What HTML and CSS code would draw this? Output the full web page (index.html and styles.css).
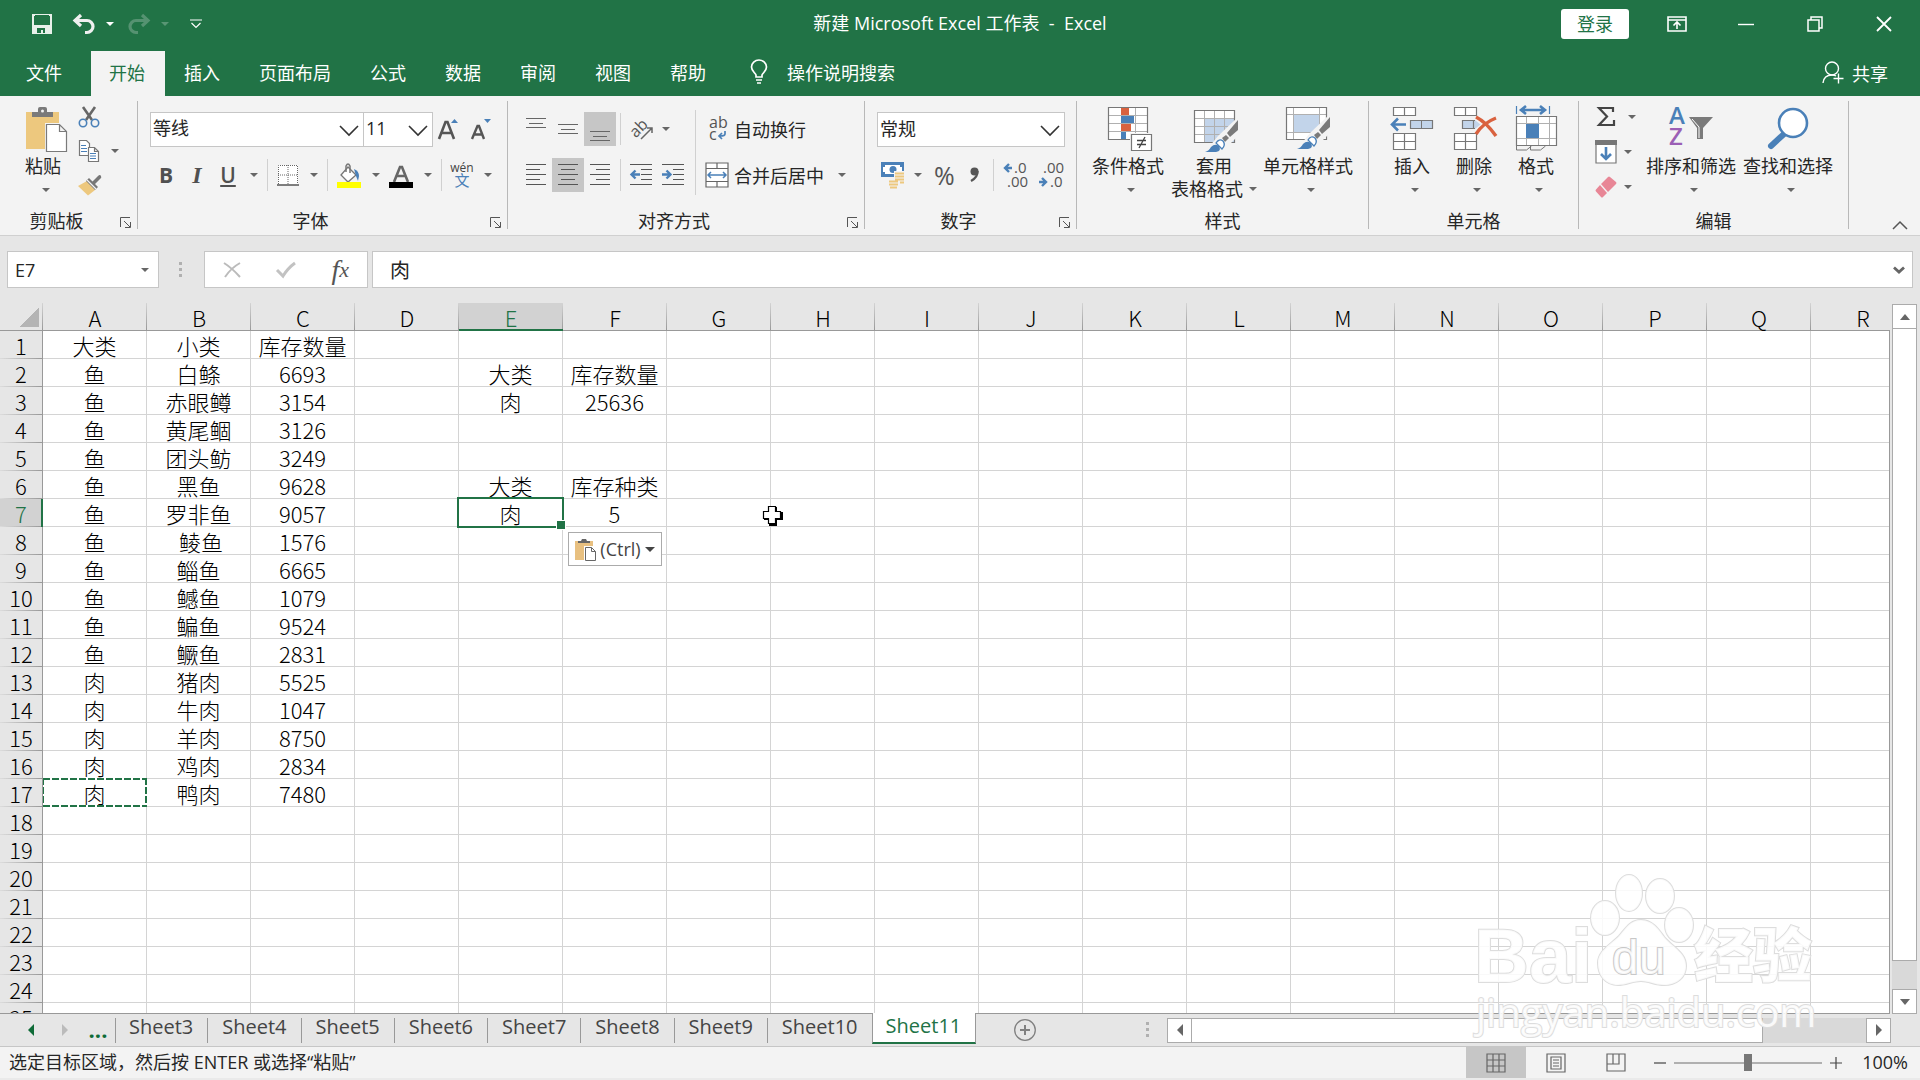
FILE: index.html
```
<!DOCTYPE html>
<html lang="zh-CN">
    <head>
        <meta charset="utf-8">
        <title>新建 Microsoft Excel 工作表 - Excel</title>
        <link rel="stylesheet" href="styles.css">
        <script src="script.js" defer></script>
    </head>

    <body>

        <!-- Title bar -->
        <header class="titleBar">
            <div class="quickAccess">
                <button class="qatButton" aria-label="保存"><svg width="20" height="20" viewBox="0 0 20 20"><path d="M1 1h18v18H1z" fill="none" stroke="#e8f0ea" stroke-width="2"/><path d="M2 11h16v8H2z" fill="#e8f0ea"/><path d="M3 1h14v9H3z" fill="#217346"/><path d="M5 14h8v5h-2v-3h-2v3H5z" fill="#217346"/></svg></button>
                <button class="qatButton undo" aria-label="撤消"><svg width="22" height="20" viewBox="0 0 22 20"><path d="M8 1L2 6.500l6 5.500M2.500 6.500H14a6 6 0 0 1 0 12h-2" fill="none" stroke="#f0f0f0" stroke-width="3.200"/></svg><i class="caret"></i></button>
                <button class="qatButton redo" aria-label="恢复"><svg width="22" height="20" viewBox="0 0 22 20"><path d="M14 1l6 5.500-6 5.500M19.500 6.500H8a6 6 0 0 0 0 12h2" fill="none" stroke="#f0f0f0" stroke-width="3.200"/></svg><i class="caret"></i></button>
                <button class="qatButton" aria-label="自定义快速访问工具栏"><svg width="12" height="10" viewBox="0 0 12 10"><path d="M0 1h12M1.500 4L6 8.500 10.500 4" fill="none" stroke="#fff" stroke-width="1.200"/></svg></button>
            </div>
            <h1 class="docTitle">新建 Microsoft Excel 工作表&nbsp; -&nbsp; Excel</h1>
            <div class="windowButtons">
                <button class="signIn">登录</button>
                <button class="windowButton" aria-label="功能区显示选项"><svg width="20" height="16" viewBox="0 0 20 16"><path d="M1 1h18v14H1zM1 4h18M10 13V7M6.500 9.500L10 6l3.500 3.500" fill="none" stroke="#fff" stroke-width="1.600"/></svg></button>
                <button class="windowButton" aria-label="最小化"><svg width="16" height="16" viewBox="0 0 16 16"><path d="M0 8.500h16" stroke="#fff" stroke-width="1.400"/></svg></button>
                <button class="windowButton" aria-label="向下还原"><svg width="16" height="16" viewBox="0 0 16 16"><path d="M1 4h11v11H1zM4 4V1h11v11h-3" fill="none" stroke="#fff" stroke-width="1.500"/></svg></button>
                <button class="windowButton" aria-label="关闭"><svg width="16" height="16" viewBox="0 0 16 16"><path d="M1 1l14 14M15 1L1 15" stroke="#fff" stroke-width="1.800"/></svg></button>
            </div>
        </header>

        <!-- Ribbon tabs -->
        <nav class="ribbonTabs">
            <button class="ribbonTab file">文件</button>
            <button class="ribbonTab active">开始</button>
            <button class="ribbonTab">插入</button>
            <button class="ribbonTab">页面布局</button>
            <button class="ribbonTab">公式</button>
            <button class="ribbonTab">数据</button>
            <button class="ribbonTab">审阅</button>
            <button class="ribbonTab">视图</button>
            <button class="ribbonTab">帮助</button>
            <button class="tellMe"><svg width="18" height="25" viewBox="0 0 18 25"><path d="M6 18v-2C5 13.500 1.500 12 1.500 8a7.500 7 0 0 1 15 0c0 4-3.500 5.500-4.500 8v2zM6 21h6M7 24h4" fill="none" stroke="#fff" stroke-width="1.700"/></svg>操作说明搜索</button>
            <button class="share"><svg width="22" height="23" viewBox="0 0 22 23"><circle cx="10" cy="7.500" r="6.500" fill="none" stroke="#fff" stroke-width="1.400"/><path d="M1 22c.5-5 4-8 9-8 2 0 3 .3 4 1M16.500 12.500v10M11.500 17.500h10" fill="none" stroke="#fff" stroke-width="1.400"/></svg>共享</button>
        </nav>

        <!-- Ribbon -->
        <main class="ribbon">

            <section class="group clipboardGroup">
                <div class="groupBody">
                    <button class="bigButton pasteButton"><svg width="44" height="46" viewBox="0 0 44 46"><path d="M1 6h33v37H1z" fill="#edc87e"/><path d="M7 11V6h6V3q0-2 2-2h5q2 0 2 2v3h6v5z" fill="#7a7a7a"/><circle cx="17.500" cy="5" r="1.500" fill="#f3f3f3"/><path d="M20 17h15l8 8v22H20z" fill="#f3f3f3"/><path d="M21.500 18.500h13l7 7v20h-20zM34.500 18.500v7h7" fill="#fff" stroke="#7a7a7a" stroke-width="1.200"/></svg><span>粘贴</span><i class="caret"></i></button>
                    <div class="smallColumn">
                        <button class="iconButton" aria-label="剪切"><svg width="22" height="22" viewBox="0 0 22 22"><path d="M5 1l9 13M17 1L8 14" stroke="#666" stroke-width="2.600"/><circle cx="5" cy="17" r="3.700" fill="none" stroke="#4a80b8" stroke-width="1.600"/><circle cx="17" cy="17" r="3.700" fill="none" stroke="#4a80b8" stroke-width="1.600"/></svg></button>
                        <button class="iconButton" aria-label="复制"><svg width="22" height="22" viewBox="0 0 22 22"><path d="M1.500.500h7l3 3v12h-10z" fill="#fff" stroke="#777" stroke-width="1.200"/><path d="M3 5.500h5M3 8.500h6M3 11.500h6" stroke="#4a80b8"/><path d="M10.500 7.500h6l4 4v10h-10zM16.500 7.500v4h4" fill="#fff" stroke="#777" stroke-width="1.200"/><path d="M12 13.500h6M12 16h6M12 18.500h6" stroke="#4a80b8"/></svg><i class="caret"></i></button>
                        <button class="iconButton" aria-label="格式刷"><svg width="24" height="22" viewBox="0 0 24 22"><path d="M0 12l9-5 8 9-7 5.500z" fill="#edc87e"/><path d="M8 7l3-3 9 9-3 3z" fill="#777"/><path d="M13 9l7-7q2-2 3 0 1 2-1 3l-6 6z" fill="#777"/><path d="M9 6l9 9" stroke="#f3f3f3" stroke-width="1.300"/></svg></button>
                    </div>
                </div>
                <div class="groupFoot"><h2>剪贴板</h2><button class="launcher" aria-label="剪贴板设置"><svg width="11" height="11" viewBox="0 0 11 11"><path d="M.500 10V.500H10M4 4l6 6M10.500 5v5.500H5" fill="none" stroke="#555"/></svg></button></div>
            </section>

            <section class="group fontGroup">
                <div class="groupBody rows">
                    <div class="toolRow">
                        <label class="combo fontName"><select aria-label="字体"><option>等线</option></select><svg width="20" height="11" viewBox="0 0 20 11"><path d="M1 1l9 9 9-9" fill="none" stroke="#333" stroke-width="1.600"/></svg></label>
                        <label class="combo fontSize"><select aria-label="字号"><option>11</option></select><svg width="20" height="11" viewBox="0 0 20 11"><path d="M1 1l9 9 9-9" fill="none" stroke="#333" stroke-width="1.600"/></svg></label>
                        <button class="iconButton growFont" aria-label="增大字号"><svg width="20" height="20" viewBox="0 0 20 20"><path d="M1 20L7.500 3h2L16 20M4 14h9" fill="none" stroke="#555" stroke-width="2.600"/><path d="M13 4l3.500-4L20 4z" fill="#4a80b8"/></svg></button>
                        <button class="iconButton shrinkFont" aria-label="减小字号"><svg width="20" height="20" viewBox="0 0 20 20"><path d="M1 20L6.500 7h1.500l5 13M3.500 15.500h7" fill="none" stroke="#555" stroke-width="2.400"/><path d="M13 0h7l-3.500 4z" fill="#4a80b8"/></svg></button>
                    </div>
                    <div class="toolRow fontTools">
                        <button class="iconButton letter bold">B</button>
                        <button class="iconButton letter italic">I</button>
                        <button class="iconButton letter underline"><u>U</u></button>
                        <i class="caret"></i>
                        <i class="rule"></i>
                        <button class="iconButton" aria-label="边框"><svg width="22" height="22" viewBox="0 0 22 22"><path d="M1 1h20v20H1z" fill="#fff"/><path d="M1.500 20V1.500h19V20M11 1v20M1 11h20" fill="none" stroke="#666" stroke-dasharray="1 1"/><path d="M0 21h22" stroke="#555" stroke-width="1.500"/></svg></button>
                        <i class="caret"></i>
                        <i class="rule"></i>
                        <button class="iconButton" aria-label="填充颜色"><svg width="24" height="25" viewBox="0 0 24 25"><path d="M11 4l8 8-8 7-7-7z" fill="#fff" stroke="#777" stroke-width="1.300"/><path d="M9 9V3q2-4 4 0v7" fill="none" stroke="#777" stroke-width="1.500"/><path d="M17 6q5 2 5 7l-1 5-2-5z" fill="#4a80b8"/><path d="M0 19h24v6H0z" fill="#ff0"/></svg></button>
                        <i class="caret"></i>
                        <button class="iconButton" aria-label="字体颜色"><svg width="24" height="25" viewBox="0 0 24 25"><path d="M5 19L11 4h2l6 15M7.500 13h9" fill="none" stroke="#666" stroke-width="2.600"/><path d="M0 19h24v6H0z"/></svg></button>
                        <i class="caret"></i>
                        <i class="rule"></i>
                        <button class="iconButton pinyin"><span>wén</span><b>文</b></button>
                        <i class="caret"></i>
                    </div>
                </div>
                <div class="groupFoot"><h2>字体</h2><button class="launcher" aria-label="字体设置"><svg width="11" height="11" viewBox="0 0 11 11"><path d="M.500 10V.500H10M4 4l6 6M10.500 5v5.500H5" fill="none" stroke="#555"/></svg></button></div>
            </section>

            <section class="group alignGroup">
                <div class="groupBody">
                    <div class="rows alignLeftTools">
                        <div class="toolRow">
                            <button class="alignButton" aria-label="顶端对齐"><svg width="20" height="22" viewBox="0 0 20 22"><path d="M0 .500h20M3 5.500h14M0 9.500h20" stroke="#666"/></svg></button>
                            <button class="alignButton" aria-label="垂直居中"><svg width="20" height="22" viewBox="0 0 20 22"><path d="M0 6.500h20M3 11.500h14M0 15.500h20" stroke="#666"/></svg></button>
                            <button class="alignButton pressed" aria-label="底端对齐"><svg width="20" height="22" viewBox="0 0 20 22"><path d="M0 13.500h20M3 18.500h14M0 22.500h20" stroke="#666"/></svg></button>
                            <i class="rule"></i>
                            <button class="iconButton orient" aria-label="方向"><svg width="22" height="22" viewBox="0 0 22 22"><text x="-1" y="15" class="iconText" font-size="16" transform="rotate(-45 8 12)">ab</text><path d="M9 21L20 10M15 10h5v5" fill="none" stroke="#666" stroke-width="1.500"/></svg><i class="caret"></i></button>
                        </div>
                        <div class="toolRow">
                            <button class="alignButton" aria-label="左对齐"><svg width="20" height="22" viewBox="0 0 20 22"><path d="M0 .500h20M0 5.500h14M0 10.500h20M0 15.500h14M0 20.500h20" stroke="#555"/></svg></button>
                            <button class="alignButton pressed" aria-label="居中"><svg width="20" height="22" viewBox="0 0 20 22"><path d="M0 .500h20M3 5.500h14M0 10.500h20M3 15.500h14M0 20.500h20" stroke="#555"/></svg></button>
                            <button class="alignButton" aria-label="右对齐"><svg width="20" height="22" viewBox="0 0 20 22"><path d="M0 .500h20M6 5.500h14M0 10.500h20M6 15.500h14M0 20.500h20" stroke="#555"/></svg></button>
                            <i class="rule"></i>
                            <button class="alignButton" aria-label="减少缩进量"><svg width="22" height="22" viewBox="0 0 22 22"><path d="M0 .500h22M11 5.500h11M11 10.500h11M11 15.500h11M0 20.500h22" stroke="#555"/><path d="M10 10.500H2M5.500 6.500l-4 4 4 4" fill="none" stroke="#4a80b8" stroke-width="2.400"/></svg></button>
                            <button class="alignButton" aria-label="增加缩进量"><svg width="22" height="22" viewBox="0 0 22 22"><path d="M0 .500h22M11 5.500h11M11 10.500h11M11 15.500h11M0 20.500h22" stroke="#555"/><path d="M0 10.500h8M4.500 6.500l4 4-4 4" fill="none" stroke="#4a80b8" stroke-width="2.400"/></svg></button>
                        </div>
                    </div>
                    <div class="rows alignRightTools">
                        <button class="textButton"><svg width="24" height="24" viewBox="0 0 24 24"><text x="4" y="11" class="iconText" font-size="16">ab</text><text x="4" y="23" class="iconText" font-size="16">c</text><path d="M20 14v3q0 2-5 2M17 16l-3 3 3 3" fill="none" stroke="#4a80b8" stroke-width="1.700"/></svg>自动换行</button>
                        <button class="textButton"><svg width="24" height="26" viewBox="0 0 24 26"><path d="M1 1h22v24H1z" fill="#fff" stroke="#666" stroke-width="1.200"/><path d="M1 6.500h22M1 19.500h22M12 1v5.500M12 19.500V25" stroke="#666" stroke-width="1.200"/><path d="M3 13h18M6 10l-3 3 3 3M18 10l3 3-3 3" fill="none" stroke="#4a80b8" stroke-width="1.500"/></svg>合并后居中<i class="caret"></i></button>
                    </div>
                </div>
                <div class="groupFoot"><h2>对齐方式</h2><button class="launcher" aria-label="对齐设置"><svg width="11" height="11" viewBox="0 0 11 11"><path d="M.500 10V.500H10M4 4l6 6M10.500 5v5.500H5" fill="none" stroke="#555"/></svg></button></div>
            </section>

            <section class="group numberGroup">
                <div class="groupBody rows">
                    <label class="combo numberFormat"><select aria-label="数字格式"><option>常规</option></select><svg width="20" height="11" viewBox="0 0 20 11"><path d="M1 1l9 9 9-9" fill="none" stroke="#333" stroke-width="1.600"/></svg></label>
                    <div class="toolRow numberTools">
                        <button class="iconButton" aria-label="会计数字格式"><svg width="24" height="26" viewBox="0 0 24 26"><path d="M0 0h23v15H0z" fill="#4a80b8"/><path d="M4 3h15v2h2v5h-2v2H4v-2H2V5h2z" fill="#fff"/><circle cx="12" cy="7.500" r="3.500" fill="#4a80b8"/><path d="M13 9h11v14H18v4H8v-9h5z" fill="#f3f3f3"/><path d="M14 11.500h9M14 14.500h9M14 17.500h9M19 20.500h4M8 19.500h9M8 22.500h9M9 25.500h7" stroke="#edc87e" stroke-width="2"/></svg><i class="caret"></i></button>
                        <button class="iconButton percent">%</button>
                        <button class="iconButton comma" aria-label="千位分隔样式"><svg width="10" height="16" viewBox="0 0 10 16"><circle cx="4.500" cy="4.500" r="4" fill="#555"/><path d="M7.500 4Q8 10 1 14" fill="none" stroke="#555" stroke-width="2.200"/></svg></button>
                        <i class="rule"></i>
                        <button class="iconButton" aria-label="增加小数位数"><svg width="24" height="26" viewBox="0 0 24 26"><text x="11" y="11" class="iconText" font-size="15">.0</text><text x="4" y="25" class="iconText" font-size="15">.00</text><path d="M9 6H2M6 2L2 6l4 4" fill="none" stroke="#4a80b8" stroke-width="2.400"/></svg></button>
                        <button class="iconButton" aria-label="减少小数位数"><svg width="24" height="26" viewBox="0 0 24 26"><text x="4" y="11" class="iconText" font-size="15">.00</text><text x="11" y="25" class="iconText" font-size="15">.0</text><path d="M0 20h7M3 16l4 4-4 4" fill="none" stroke="#4a80b8" stroke-width="2.400"/></svg></button>
                    </div>
                </div>
                <div class="groupFoot"><h2>数字</h2><button class="launcher" aria-label="数字设置"><svg width="11" height="11" viewBox="0 0 11 11"><path d="M.500 10V.500H10M4 4l6 6M10.500 5v5.500H5" fill="none" stroke="#555"/></svg></button></div>
            </section>

            <section class="group stylesGroup">
                <div class="groupBody">
                    <button class="bigButton condFormat"><svg width="44" height="46" viewBox="0 0 44 46"><path d="M.500 1.500h39v32H.500z" fill="#fff"/><path d="M1 9.500h38M1 17.500h38M1 25.500h38M13.500 1v32M27.500 1v32" stroke="#b0b0b0"/><path d="M13 2h8v7h-8zM13 18h10v7H13z" fill="#d9623f"/><path d="M13 10h13v7H13zM13 26h5v7h-5z" fill="#4a80b8"/><path d="M.500 1.500h39v32H.500z" fill="none" stroke="#777" stroke-width="1.200"/><path d="M22 27h22v19H22z" fill="#f3f3f3"/><path d="M23.500 28.500h20v16h-20z" fill="#fff" stroke="#777" stroke-width="1.200"/><path d="M29 34.500h9M29 38.500h9M37 31l-6 11" stroke="#444" stroke-width="1.300"/></svg><span>条件格式</span><i class="caret"></i></button>
                    <button class="bigButton tableFormat"><svg width="44" height="46" viewBox="0 0 44 46"><path d="M.500 4.500h40v32H.500z" fill="#fff"/><path d="M11 13h29v23H11z" fill="#c2d4ea"/><path d="M1 12.500h39M1 20.500h39M1 28.500h39M10.500 4v32M20.500 4v32M30.500 4v32" stroke="#b0b0b0"/><path d="M.500 4.500h40v32H.500z" fill="none" stroke="#777" stroke-width="1.200"/><path d="M11 46L24 30 44 11v19L28 46z" fill="#f3f3f3"/><path d="M44 14v10l-8 7-3-4z" fill="#7a7a7a"/><path d="M28 32l4-3 3 3-4 4z" fill="#7a7a7a"/><path d="M22 37q3-5 7-2 3 4-1 8z" fill="#fff" stroke="#4a80b8" stroke-width="1.300"/><path d="M11 46q4-1 6-5 4-4 8-1 3 5-3 6z" fill="#4a80b8"/></svg><span>套用</span><span class="withCaret">表格格式<i class="caret"></i></span></button>
                    <button class="bigButton cellStyle"><svg width="44" height="46" viewBox="0 0 44 46"><path d="M.500 1.500h40v32H.500z" fill="#fff"/><path d="M1 8.500h39M1 26.500h39M7.500 1v32M33.500 1v32" stroke="#b0b0b0"/><path d="M8 9h25v17H8z" fill="#c2d4ea"/><path d="M.500 1.500h40v32H.500z" fill="none" stroke="#777" stroke-width="1.200"/><path d="M11 43L24 27 44 8v19L28 43z" fill="#f3f3f3"/><path d="M44 11v10l-8 7-3-4z" fill="#7a7a7a"/><path d="M28 29l4-3 3 3-4 4z" fill="#7a7a7a"/><path d="M22 34q3-5 7-2 3 4-1 8z" fill="#fff" stroke="#4a80b8" stroke-width="1.300"/><path d="M11 43q4-1 6-5 4-4 8-1 3 5-3 6z" fill="#4a80b8"/></svg><span>单元格样式</span><i class="caret"></i></button>
                </div>
                <div class="groupFoot"><h2>样式</h2></div>
            </section>

            <section class="group cellsGroup">
                <div class="groupBody">
                    <button class="bigButton"><svg width="44" height="46" viewBox="0 0 44 46"><path d="M3.500 1.500h22v8h-22zM3.500 27.500h22v16h-22z" fill="#fff" stroke="#777" stroke-width="1.200"/><path d="M14.500 2v8M14.500 28v16M4 35.500h22" stroke="#777" stroke-width="1.200"/><path d="M20.500 14.500h22v8h-22z" fill="#c2d4ea" stroke="#777" stroke-width="1.200"/><path d="M31.500 15v8" stroke="#777"/><path d="M16 18.500H3M8 12.500l-6 6 6 6" fill="none" stroke="#4a80b8" stroke-width="2.600"/></svg><span>插入</span><i class="caret"></i></button>
                    <button class="bigButton"><svg width="44" height="46" viewBox="0 0 44 46"><path d="M2.500 1.500h22v8h-22zM2.500 27.500h22v16h-22z" fill="#fff" stroke="#777" stroke-width="1.200"/><path d="M13.500 2v8M13.500 28v16M3 35.500h22" stroke="#777" stroke-width="1.200"/><path d="M10.500 14.500h13l5 4-5 4h-13z" fill="#c2d4ea"/><path d="M23 14.500H10.500v8H23M21.500 15v8" fill="none" stroke="#777" stroke-width="1.200"/><path d="M24 11q10 5 20 19M44 12Q31 17 24 28" fill="none" stroke="#d9623f" stroke-width="3.400"/></svg><span>删除</span><i class="caret"></i></button>
                    <button class="bigButton"><svg width="44" height="46" viewBox="0 0 44 46"><path d="M2.500 0v8M35.500 0v8" stroke="#4a80b8" stroke-width="1.200"/><path d="M7 4h24M12 0L7 4l5 4M26 0l5 4-5 4" fill="none" stroke="#4a80b8" stroke-width="2.600"/><path d="M2.500 10.500h40v29h-40z" fill="#fff" stroke="#777" stroke-width="1.200"/><path d="M3 17.500h39M3 32.500h39M12.500 11v28M24.500 11v28M35.500 11v28" stroke="#b0b0b0"/><path d="M12 18h13v14H12z" fill="#4a80b8"/><path d="M2.500 40v4h10l5-4M16.500 44h10l5-4M16.500 40v4" fill="none" stroke="#777"/></svg><span>格式</span><i class="caret"></i></button>
                </div>
                <div class="groupFoot"><h2>单元格</h2></div>
            </section>

            <section class="group editGroup">
                <div class="groupBody">
                    <div class="smallColumn">
                        <button class="iconButton sum" aria-label="自动求和"><svg width="22" height="22" viewBox="0 0 22 22"><path d="M18 6V2H4l8 8.500L4 19h15v-5" fill="none" stroke="#444" stroke-width="2.200"/></svg><i class="caret"></i></button>
                        <button class="iconButton" aria-label="填充"><svg width="22" height="24" viewBox="0 0 22 24"><path d="M1 1h20v22H1z" fill="#fff" stroke="#777" stroke-width="1.200"/><path d="M0 0h22v5H0z" fill="#777"/><path d="M11 7v12M6 14l5 5 5-5" fill="none" stroke="#4a80b8" stroke-width="2.600"/></svg><i class="caret"></i></button>
                        <button class="iconButton" aria-label="清除"><svg width="22" height="22" viewBox="0 0 22 22"><path d="M13 1q1-1 2 0l6 5q1 1 0 2l-8 8-7-8z" fill="#e88696"/><path d="M5 9l7 8-4 4q-1 1-2 0l-5-5.500q-1-1 0-2z" fill="#e88696"/></svg><i class="caret"></i></button>
                    </div>
                    <button class="bigButton sortButton"><svg width="44" height="46" viewBox="0 0 44 46"><text x="0" y="18" font-size="24" fill="#4a80b8" class="azText">A</text><text x="0" y="39" font-size="24" fill="#9b5fb5" class="azText">Z</text><path d="M20 11h24L34 22v11h-6V22z" fill="#7a7a7a"/><path d="M23 13l7 8v11" fill="none" stroke="#fff"/></svg><span>排序和筛选</span><i class="caret"></i></button>
                    <button class="bigButton findButton"><svg width="44" height="46" viewBox="0 0 44 46"><path d="M18 28L5 40" stroke="#4a80b8" stroke-width="6" stroke-linecap="round"/><circle cx="27" cy="17" r="14" fill="#fff" stroke="#4a80b8" stroke-width="2.600"/></svg><span>查找和选择</span><i class="caret"></i></button>
                </div>
                <div class="groupFoot"><h2>编辑</h2></div>
            </section>

            <button class="collapse" aria-label="折叠功能区"><svg width="16" height="9" viewBox="0 0 16 9"><path d="M1 8l7-7 7 7" fill="none" stroke="#555" stroke-width="1.500"/></svg></button>
        </main>

        <!-- Name box and formula bar -->
        <div class="formulaRow">
            <label class="nameBox"><input type="text" value="E7" aria-label="名称框"><i class="caret"></i></label>
            <i class="dots"></i>
            <div class="formulaButtons">
                <button class="iconButton" aria-label="取消"><svg width="18" height="16" viewBox="0 0 18 16"><path d="M1 1q8 5 16 14M17 1Q8 6 2 15" fill="none" stroke="#bbb" stroke-width="2"/></svg></button>
                <button class="iconButton" aria-label="输入"><svg width="20" height="17" viewBox="0 0 20 17"><path d="M1 9l6 6Q12 7 19 2" fill="none" stroke="#c2c2c2" stroke-width="3"/></svg></button>
                <button class="iconButton fx" aria-label="插入函数">f<small>x</small></button>
            </div>
            <label class="formulaBox"><input type="text" value="肉" aria-label="编辑栏"><svg width="12" height="8" viewBox="0 0 12 8"><path d="M1 1.500l5 4.500 5-4.500" fill="none" stroke="#666" stroke-width="2.800"/></svg></label>
        </div>

        <!-- Worksheet, filled by script.js -->
        <div class="sheetArea">
            <div class="sheet">
                <table class="cells" id="cells">
                    <thead><tr id="columnRow"></tr></thead>
                    <tbody id="cellRows"></tbody>
                </table>
                <button class="pasteOptions"><svg width="21" height="23" viewBox="0 0 21 23"><path d="M0 3h18v19H0z" fill="#e8c080"/><path d="M3 5V3h3l1-2h4l1 2h3v2z" fill="#666"/><path d="M9 8h12v15H9z" fill="#fff"/><path d="M10.500 9.500h6l4 4v9h-10zM16.500 9.500v4h4" fill="#fff" stroke="#666"/></svg>(Ctrl)<i class="caret"></i></button>
                <svg class="crossCursor" width="21" height="21" viewBox="0 0 21 21"><path d="M7 2h8v5h6v8h-6v6H7v-6H2V7h5z"/><path d="M6.500 1.500h7v5h5v7h-5v5h-7v-5h-5v-7h5z" fill="#fff" stroke="#000" stroke-width="1.200"/></svg>
            </div>
            <div class="verticalScroll">
                <button class="scrollButton" aria-label="向上滚动"><i class="up"></i></button>
                <div class="thumb"></div>
                <div class="track"></div>
                <button class="scrollButton" aria-label="向下滚动"><i class="down"></i></button>
            </div>
        </div>

        <!-- Sheet tabs -->
        <footer class="sheetTabs">
            <button class="sheetNav" aria-label="上一张"><i class="left"></i></button>
            <button class="sheetNav dim" aria-label="下一张"><i class="right"></i></button>
            <button class="moreSheets">...</button>
            <button class="sheetTab">Sheet3</button>
            <button class="sheetTab">Sheet4</button>
            <button class="sheetTab">Sheet5</button>
            <button class="sheetTab">Sheet6</button>
            <button class="sheetTab">Sheet7</button>
            <button class="sheetTab">Sheet8</button>
            <button class="sheetTab">Sheet9</button>
            <button class="sheetTab">Sheet10</button>
            <button class="sheetTab active">Sheet11</button>
            <button class="addSheet" aria-label="新工作表"><svg width="22" height="22" viewBox="0 0 22 22"><circle cx="11" cy="11" r="10.300" fill="none" stroke="#808080" stroke-width="1.300"/><path d="M11 6v10M6 11h10" stroke="#808080" stroke-width="2"/></svg></button>
            <i class="dots"></i>
            <div class="horizontalScroll">
                <button class="scrollButton" aria-label="向左滚动"><i class="left"></i></button>
                <div class="thumb"></div>
                <div class="track"></div>
                <button class="scrollButton" aria-label="向右滚动"><i class="right"></i></button>
            </div>
        </footer>

        <!-- Status bar -->
        <div class="statusBar">
            <p class="statusText">选定目标区域，然后按 ENTER 或选择“粘贴”</p>
            <button class="viewButton pressed" aria-label="普通"><svg width="20" height="20" viewBox="0 0 20 20"><path d="M1 1h18v18H1zM1 7h18M1 13h18M7 1v18M13 1v18" fill="none" stroke="#666" stroke-width="1.200"/></svg></button>
            <button class="viewButton" aria-label="页面布局"><svg width="20" height="20" viewBox="0 0 20 20"><path d="M1 1h18v18H1zM5 4h10v12H5zM7 7h6M7 10h6M7 13h6" fill="none" stroke="#666" stroke-width="1.200"/></svg></button>
            <button class="viewButton" aria-label="分页预览"><svg width="20" height="20" viewBox="0 0 20 20"><path d="M1 1h18v17H1zM7 1v10M13 1v10H1" fill="none" stroke="#666" stroke-width="1.200"/></svg></button>
            <button class="zoomButton" aria-label="缩小"><svg width="12" height="12" viewBox="0 0 12 12"><path d="M0 6h12" stroke="#444" stroke-width="1.200"/></svg></button>
            <input class="zoomSlider" type="range" min="0" max="200" value="100" aria-label="显示比例">
            <button class="zoomButton" aria-label="放大"><svg width="12" height="12" viewBox="0 0 12 12"><path d="M0 6h12M6 0v12" stroke="#444" stroke-width="1.200"/></svg></button>
            <button class="zoomValue">100%</button>
        </div>

        <svg class="watermark" width="370" height="180" viewBox="0 0 370 180">
            <g class="markFill">
                <text x="4" y="112" class="markLatin" font-size="76">Bai</text>
                <text x="224" y="107" class="markHan" font-size="59">经验</text>
                <text x="6" y="157" class="markUrl" font-size="40">jingyan.baidu.com</text>
                <ellipse cx="135" cy="48" rx="14" ry="17"/>
                <ellipse cx="159" cy="23" rx="13" ry="18"/>
                <ellipse cx="190" cy="26" rx="14" ry="17"/>
                <ellipse cx="209" cy="55" rx="14" ry="17"/>
                <path d="M171 50c12 0 18 10 24 18 9 10 21 15 21 28 0 12-10 19-22 19-9 0-15-4-23-4s-15 4-23 4c-12 0-20-9-20-22 0-12 12-18 21-27 7-8 11-16 22-16z"/>
                <text x="142" y="104" class="markDu" font-size="48">du</text>
            </g>
        </svg>

    </body>
</html>
```
FILE: styles.css
```
* {
    box-sizing: border-box;
}

body {
    margin: 0;
    height: 100vh;
    display: flex;
    flex-direction: column;
    overflow: hidden;
    background-color: #e6e6e6;
    color: #262626;
    font-family: "Open Sans", "Noto Sans CJK SC", sans-serif;
    font-size: 18px;
}

button, input, select {
    font: inherit;
    color: inherit;
    border: none;
    background: none;
    padding: 0;
    margin: 0;
}

button {
    display: flex;
    align-items: center;
    justify-content: center;
    flex-shrink: 0;
    white-space: nowrap;
}

svg {
    display: block;
    flex-shrink: 0;
    overflow: visible;
}

h1, h2, p {
    margin: 0;
    font-size: 18px;
    font-weight: normal;
}

.caret {
    flex-shrink: 0;
    border: 4px solid transparent;
    border-top-color: #666;
    border-bottom: none;
}

.rule {
    width: 1px;
    height: 32px;
    background-color: #d0d0d0;
}

.iconText {
    font-family: "Open Sans", sans-serif;
    fill: #555;
}

/* Title bar */

.titleBar {
    flex: none;
    height: 51px;
    position: relative;
    display: flex;
    justify-content: space-between;
    background-color: #217346;
    color: #fff;
    padding-bottom: 3px;
}

.quickAccess {
    display: flex;
    align-items: center;
    padding-left: 32px;
    gap: 21px;
}

.quickAccess .caret {
    border-top-color: #fff;
}

.undo, .redo {
    gap: 11px;
}

.redo {
    margin-left: -7px;
    opacity: 0.25;
}

.docTitle {
    line-height: 46px;
    position: absolute;
    left: 0;
    right: 0;
    text-align: center;
    pointer-events: none;
}

.windowButtons {
    display: flex;
    align-items: center;
    padding-right: 2px;
}

.signIn {
    width: 68px;
    height: 30px;
    padding-bottom: 2px;
    margin-right: 13px;
    border-radius: 3px;
    background-color: #fff;
    color: #217346;
}

.windowButton {
    width: 69px;
    height: 46px;
}

/* Ribbon tabs */

.ribbonTabs {
    flex: none;
    height: 45px;
    display: flex;
    background-color: #217346;
    color: #fff;
}

.ribbonTab {
    padding: 0 20px 4px 19px;
}

.file {
    padding-left: 26px;
    padding-right: 29px;
}

.ribbonTab.active {
    padding-left: 18px;
    background-color: #f3f3f3;
    color: #217346;
}

.tellMe {
    gap: 19px;
    margin-left: 24px;
    padding-bottom: 4px;
}

.share {
    margin-left: auto;
    margin-right: 32px;
    padding-bottom: 2px;
    gap: 8px;
}

/* Ribbon */

.ribbon {
    flex: none;
    height: 140px;
    display: flex;
    padding: 5px 0;
    background-color: #f3f3f3;
    border-bottom: 1px solid #d0d0d0;
}

.group {
    height: 128px;
    flex: none;
    display: flex;
    flex-direction: column;
    border-right: 1px solid #b8b8b8;
}

.groupBody {
    flex: 1;
    display: flex;
}

.groupFoot {
    display: flex;
    height: 16px;
    line-height: 16px;
}

.groupFoot h2 {
    flex: 1;
    text-align: center;
    line-height: 16px;
}

.launcher {
    width: 24px;
    justify-content: flex-end;
    padding: 2px 6px 0 0;
}

.rows {
    display: flex;
    flex-direction: column;
    gap: 12px;
    padding-top: 11px;
}

.toolRow {
    display: flex;
    align-items: center;
    height: 34px;
}

.bigButton {
    flex-direction: column;
    justify-content: flex-start;
    padding-top: 5px;
}

.bigButton svg {
    margin-bottom: 3px;
}

.bigButton span {
    line-height: 22px;
}

.bigButton > .caret {
    margin-top: 11px;
    margin-left: 6px;
}

.bigButton .withCaret {
    display: flex;
    align-items: center;
    gap: 6px;
    line-height: 24px;
}

.smallColumn {
    display: flex;
    flex-direction: column;
    align-items: flex-start;
    gap: 12px;
    padding-top: 5px;
}

.smallColumn .iconButton {
    gap: 11px;
}

.clipboardGroup {
    width: 138px;
}

.pasteButton {
    width: 70px;
    margin-left: 8px;
}

.pasteButton svg {
    margin-left: 8px;
}

.fontGroup {
    width: 370px;
}

.alignGroup {
    width: 357px;
}

.numberGroup {
    width: 212px;
}

.stylesGroup {
    width: 292px;
}

.cellsGroup {
    width: 210px;
}

.editGroup {
    width: 270px;
}

.fontGroup .rows {
    padding-left: 12px;
}

.combo {
    position: relative;
    display: block;
    height: 35px;
    background-color: #fff;
    border: 1px solid #c6c6c6;
}

.combo select {
    appearance: none;
    width: 100%;
    height: 100%;
    padding: 0 2px 2px;
}

.combo svg {
    position: absolute;
    right: 4px;
    top: 12px;
    pointer-events: none;
}

.fontName {
    width: 214px;
}

.fontSize {
    width: 70px;
    margin-left: -1px;
}

.growFont {
    margin-left: 5px;
}

.shrinkFont {
    margin-left: 13px;
}

.fontTools {
    gap: 9px;
    padding-left: 5px;
}

.fontTools .caret {
    margin-left: 2px;
}

.letter {
    width: 22px;
    font-size: 21px;
    font-weight: bold;
    color: #505050;
}

.italic {
    font-family: "Liberation Serif", serif;
    font-style: italic;
    font-size: 24px;
}

.underline {
    font-weight: 600;
}

.pinyin {
    flex-direction: column;
    width: 22px;
    font-size: 12px;
    line-height: 11px;
    color: #444;
}

.pinyin b {
    color: #4a80b8;
    font-size: 15px;
    line-height: 15px;
    font-weight: normal;
}

.alignLeftTools {
    width: 187px;
    padding-left: 12px;
}

.alignButton {
    width: 32px;
    height: 34px;
}

.pressed {
    background-color: #c6c6c6;
}

.alignLeftTools .rule {
    margin: 0 4px;
}

.orient {
    margin-left: 7px;
    gap: 8px;
}

.alignRightTools {
    padding-left: 10px;
    background: linear-gradient(#d0d0d0, #d0d0d0) 0 9px / 1px 85px no-repeat;
}

.textButton {
    height: 34px;
    justify-content: flex-start;
    gap: 5px;
}

.textButton .caret {
    margin-left: 9px;
}

.numberGroup .rows {
    padding-left: 12px;
}

.numberFormat {
    width: 188px;
}

.numberTools {
    gap: 16px;
    margin-top: -1px;
    padding-left: 4px;
}

.numberTools .iconButton {
    gap: 9px;
}

.numberTools .iconButton + .iconButton {
    margin-left: -4px;
}

.numberTools .rule + .iconButton {
    margin-left: -7px;
}

.percent {
    font-size: 25px;
    color: #555;
}

.numberTools .percent + .comma {
    margin: 0 -3px 0 -1px;
}

.stylesGroup .groupBody {
    padding-left: 9px;
}

.condFormat {
    width: 84px;
}

.condFormat svg {
    margin-left: 3px;
}

.tableFormat {
    width: 88px;
}

.tableFormat svg {
    margin-left: 3px;
}

.cellStyle {
    width: 100px;
}

.cellsGroup .groupBody {
    padding-left: 12px;
}

.cellsGroup .bigButton {
    width: 62px;
}

.editGroup .smallColumn {
    width: 65px;
    padding-left: 16px;
}

.editGroup .iconButton {
    gap: 7px;
}

.editGroup .sum {
    gap: 11px;
}

.azText {
    font-family: "Open Sans", sans-serif;
    font-weight: 600;
}

.sortButton {
    width: 94px;
}

.findButton {
    width: 100px;
}

.collapse {
    margin-left: auto;
    padding: 0 12px 0 0;
    align-items: flex-end;
}

/* Formula bar */

.formulaRow {
    flex: none;
    height: 67px;
    display: flex;
    padding: 15px 7px 15px;
}

.nameBox, .formulaButtons, .formulaBox {
    display: flex;
    align-items: center;
    height: 37px;
    background-color: #fff;
    border: 1px solid #c6c6c6;
}

.nameBox {
    width: 152px;
    padding-right: 9px;
}

.nameBox input {
    flex: 1;
    min-width: 0;
    padding-left: 7px;
}

.dots {
    width: 3px;
    height: 16px;
    background: repeating-linear-gradient(#b0b0b0 0 3px, transparent 3px 6px);
}

.formulaRow .dots {
    margin: 11px 22px 0 20px;
}

.formulaButtons {
    width: 164px;
    justify-content: space-between;
    padding: 0 18px 0 18px;
    margin-right: 4px;
}

.fx {
    font: italic 28px/28px "Liberation Serif", serif;
    color: #555;
}

.fx small {
    font-size: 22px;
}

.formulaBox {
    flex: 1;
    padding-right: 7px;
}

.formulaBox input {
    flex: 1;
    font-size: 20px;
    padding-left: 17px;
}

/* Worksheet */

.sheetArea {
    flex: 1;
    min-height: 0;
    display: flex;
}

.sheet {
    flex: 1;
    min-width: 0;
    position: relative;
    overflow: hidden;
    border-bottom: 1px solid #999;
}

.sheet::after {
    content: "";
    position: absolute;
    right: 0;
    top: 27px;
    bottom: 0;
    border-right: 1px solid #999;
}

.cells {
    table-layout: fixed;
    width: 1915px;
    border-spacing: 0;
    font-family: "Noto Sans CJK SC", sans-serif;
    font-weight: 300;
    font-size: 22px;
    line-height: 25px;
    color: #000;
}

.cells th, .cells td {
    height: 28px;
    padding: 1px 0 0;
    text-align: center;
    white-space: nowrap;
    font-weight: 300;
}

.cells td {
    width: 104px;
    background-color: #fff;
    border-right: 1px solid #d4d4d4;
    border-bottom: 1px solid #d4d4d4;
    position: relative;
}

.cells thead th {
    width: 104px;
    background: linear-gradient(#d4d4d4, #999) right / 1px 100% no-repeat;
    border-bottom: 1px solid #999;
}

.cells .corner {
    width: 43px;
}

.corner i {
    display: block;
    width: 19px;
    height: 19px;
    margin-left: 20px;
    background: linear-gradient(135deg, transparent 50%, #b4b4b4 50%);
}

.cells tbody th {
    border-right: 1px solid #999;
    background: linear-gradient(90deg, #dcdcdc, #999) bottom / 100% 1px no-repeat;
}

.cells thead .current {
    background-color: #d2d2d2;
    border-bottom-color: #217346;
    box-shadow: inset 0 -1px #217346;
    color: #217346;
}

.cells tbody .current {
    background-color: #d2d2d2;
    border-right-color: #217346;
    box-shadow: inset -1px 0 #217346;
    color: #217346;
}

.selected::before {
    content: "";
    position: absolute;
    z-index: 1;
    inset: -2px;
    border: 2px solid #217346;
}

.selected::after {
    content: "";
    position: absolute;
    z-index: 2;
    right: -4px;
    bottom: -4px;
    width: 8px;
    height: 8px;
    background-color: #217346;
    border: 1px solid #fff;
}

.copied::after {
    content: "";
    position: absolute;
    z-index: 1;
    inset: -1px -1px -1px 0;
    background:
        repeating-linear-gradient(90deg, #217346 0 7px, #fff 7px 9px) top / 100% 2px no-repeat,
        repeating-linear-gradient(90deg, #217346 0 7px, #fff 7px 9px) bottom / 100% 2px no-repeat,
        repeating-linear-gradient(#217346 0 7px, #fff 7px 9px) left / 1px 100% no-repeat,
        repeating-linear-gradient(#217346 0 7px, #fff 7px 9px) right / 2px 100% no-repeat;
}

.pasteOptions {
    position: absolute;
    left: 568px;
    top: 229px;
    width: 94px;
    height: 34px;
    gap: 4px;
    background-color: #fff;
    border: 1px solid #ababab;
    color: #444;
}

.pasteOptions .caret {
    border-width: 5px;
    border-bottom: none;
    border-top-color: #444;
}

.crossCursor {
    position: absolute;
    left: 762px;
    top: 202px;
}

.verticalScroll {
    width: 30px;
    padding: 1px 3px 0 2px;
    display: flex;
    flex-direction: column;
}

.scrollButton, .thumb {
    width: 25px;
    height: 25px;
    background-color: #fff;
    border: 1px solid #ababab;
}

.verticalScroll .thumb {
    height: auto;
    flex: 632;
    margin-top: -1px;
}

.verticalScroll .track {
    flex: 28;
    background-color: #d9d9d9;
}

.up, .down {
    border: 5px solid transparent;
    border-bottom: 6px solid #666;
    border-top: none;
}

.down {
    border-top: 6px solid #666;
    border-bottom: none;
}

.left, .right {
    border: 6px solid transparent;
    border-right: 6px solid #666;
    border-left: none;
}

.right {
    border-left: 6px solid #666;
    border-right: none;
}

/* Sheet tabs */

.sheetTabs {
    flex: none;
    height: 33px;
    display: flex;
    align-items: center;
    border-bottom: 1px solid #c6c6c6;
    padding-right: 29px;
}

.sheetNav {
    width: 34px;
    padding-left: 28px;
    justify-content: flex-start;
}

.sheetNav .left {
    border-right-color: #0e6b37;
}

.dim .right {
    border-left-color: #bbb;
}

.moreSheets {
    width: 47px;
    padding: 0 0 2px 13px;
    color: #0e6b37;
    font-size: 22px;
    font-weight: bold;
}

.sheetTab {
    height: 25px;
    padding: 0 14px 6px 13px;
    border-left: 1px solid #999;
    font-size: 20px;
    line-height: 20px;
    color: #444;
}

.sheetTab + .sheetTab {
    padding-left: 14px;
}

.sheetTab.active {
    position: relative;
    align-self: flex-start;
    height: 31px;
    margin-top: -1px;
    padding: 0 14px 4px 13px;
    background-color: #fff;
    border-right: 1px solid #999;
    border-bottom: 2px solid #217346;
    color: #217346;
}

.addSheet {
    margin-left: 38px;
}

.sheetTabs .dots {
    margin-left: auto;
    margin-right: 18px;
}

.horizontalScroll {
    width: 724px;
    display: flex;
}

.horizontalScroll .thumb {
    flex: 572;
    margin-left: -1px;
}

.horizontalScroll .track {
    flex: 103;
    background-color: #d9d9d9;
}

/* Status bar */

.statusBar {
    flex: none;
    height: 33px;
    display: flex;
    background-color: #f3f3f3;
    border-bottom: 2px solid #eaeaea;
    padding-right: 12px;
}

.statusText {
    flex: 1;
    padding-left: 9px;
    line-height: 30px;
}

.viewButton {
    width: 60px;
}

.zoomButton {
    width: 28px;
}

.zoomSlider {
    appearance: none;
    width: 148px;
    background: linear-gradient(#b0b0b0, #b0b0b0) center / 100% 2px no-repeat;
}

.zoomSlider::-webkit-slider-thumb {
    appearance: none;
    width: 8px;
    height: 17px;
    background-color: #777;
}

.zoomValue {
    width: 58px;
    padding-bottom: 2px;
    justify-content: flex-end;
}

/* Watermark */

.watermark {
    position: absolute;
    right: 80px;
    bottom: 30px;
    pointer-events: none;
}

.markFill {
    fill: #fff;
    fill-opacity: 0.85;
    stroke: #ddd;
    stroke-width: 2px;
    paint-order: stroke;
}

.markLatin {
    font-family: "Liberation Sans", sans-serif;
    font-weight: bold;
}

.markHan {
    font-family: "Noto Sans CJK SC", sans-serif;
    font-weight: 900;
}

.markUrl {
    font-family: "Open Sans", sans-serif;
}

.markDu {
    font-family: "Liberation Sans", sans-serif;
    stroke: #c8c8c8;
}
```
FILE: script.js
```
var columns = "ABCDEFGHIJKLMNOPQR".split("");
var rowCount = 25;

var stock = [
    ["大类", "小类", "库存数量"],
    ["鱼", "白鲦", "6693"],
    ["鱼", "赤眼鳟", "3154"],
    ["鱼", "黄尾鲴", "3126"],
    ["鱼", "团头鲂", "3249"],
    ["鱼", "黑鱼", "9628"],
    ["鱼", "罗非鱼", "9057"],
    ["鱼", "&nbsp;鲮鱼", "1576"],
    ["鱼", "鲻鱼", "6665"],
    ["鱼", "鳡鱼", "1079"],
    ["鱼", "鳊鱼", "9524"],
    ["鱼", "鳜鱼", "2831"],
    ["肉", "猪肉", "5525"],
    ["肉", "牛肉", "1047"],
    ["肉", "羊肉", "8750"],
    ["肉", "鸡肉", "2834"],
    ["肉", "鸭肉", "7480"]
];

var totals = {
    E2: "大类", F2: "库存数量",
    E3: "肉", F3: "25636",
    E6: "大类", F6: "库存种类",
    E7: "肉", F7: "5"
};

function cellText(col, row){
    if(col < 3 && row <= stock.length){
        return stock[row - 1][col];
    }
    return totals[columns[col] + row] || "";
}

// Column letters
var html = '<th class="corner"><i></i></th>';
for(let c = 0 ; c < columns.length ; c++){
    html += '<th' + (columns[c] == "E" ? ' class="current"' : '') + '>' + columns[c] + '</th>';
}
document.getElementById("columnRow").innerHTML = html;

// Row numbers and cells
html = "";
for(let r = 1 ; r <= rowCount ; r++){
    html += '<tr><th' + (r == 7 ? ' class="current"' : '') + '>' + r + '</th>';
    for(let c = 0 ; c < columns.length ; c++){
        let name = columns[c] + r;
        let cls = name == "E7" ? ' class="selected"' : name == "A17" ? ' class="copied"' : '';
        html += '<td' + cls + '>' + cellText(c, r) + '</td>';
    }
    html += '</tr>';
}
document.getElementById("cellRows").innerHTML = html;
```
